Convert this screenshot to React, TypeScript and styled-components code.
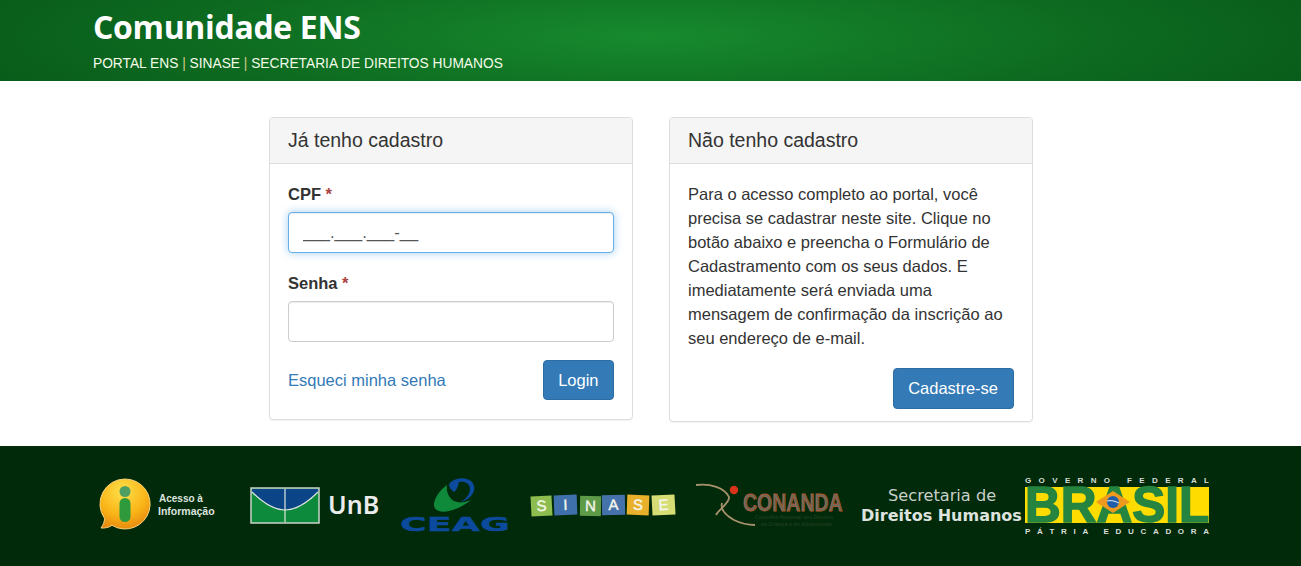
import styled, { createGlobalStyle } from "styled-components";

const GlobalStyle = createGlobalStyle`
  * {
    box-sizing: border-box;
  }

  body {
    margin: 0;
    background: #fff;
    color: #333;
    font-family: "Liberation Sans", Arial, sans-serif;
    font-size: 16.5px;
    line-height: 24px;
  }
`;

const AccessLogo = () => (
  <Logo $left={99} width={118} height={80} viewBox="99 460 118 80">
    <defs>
      <radialGradient id="bubble" cx="45%" cy="25%" r="80%">
        <stop offset="0%" stopColor="#ffe04a" />
        <stop offset="60%" stopColor="#f9b417" />
        <stop offset="100%" stopColor="#e5840f" />
      </radialGradient>
    </defs>
    <path
      d="M125 479a25 25 0 1 1-13 46.300c-3 2.200-7 3-11 2.700 2-3 3.500-6 3.600-9.500A25 25 0 0 1 125 479z"
      fill="url(#bubble)"
      stroke="#f6d27a"
      strokeWidth="1"
    />
    <circle cx="125" cy="491.500" r="5.500" fill="#4f9f62" />
    <rect x="119.500" y="498" width="11" height="24" rx="5.500" fill="#2e9a3c" />
    <LogoText x="159" y="502" fontSize="10" fontWeight="700" fill="#dfe3df">
      Acesso à
    </LogoText>
    <LogoText x="158" y="515" fontSize="10.500" fontWeight="700" fill="#dfe3df">
      Informação
    </LogoText>
  </Logo>
);

const UnbLogo = () => (
  <Logo $left={33} width={131} height={80} viewBox="250 460 131 80">
    <rect x="251" y="488" width="68" height="35" fill="#0d8a3c" stroke="#c9d3c9" strokeWidth="1.500" />
    <path d="M252 489h66v3c-9 9-20 18-33 18s-24-9-33-18z" fill="#0b4587" />
    <path d="M252 492c9 9 20 18 33 18s24-9 33-18" fill="none" stroke="#dfe8df" strokeWidth="1.200" />
    <path d="M285 489v33" stroke="#dfe8df" strokeWidth="1.200" />
    <LogoText $font="'Noto Sans'" x="328" y="514" fontSize="25" fontWeight="600" fill="#ececec">
      UnB
    </LogoText>
  </Logo>
);

const CeagLogo = () => (
  <Logo $left={19} width={110} height={80} viewBox="400 460 110 80">
    <path
      d="M447 485c-7 5-13 13-13 20 0 6 8 8 15 6 9-2 17-7 22-11-7 3-13 3-17 1-5-3-8-9-7-16z"
      fill="#0f8a3b"
    />
    <path
      d="M449 484c4-5 12-7 18-5 7 2 9 9 6 14-2 4-7 8-12 9 5-3 9-8 9-13 0-6-6-8-11-7-1 4-2 8-5 10-3-2-5-5-5-8z"
      fill="#0b4a9c"
    />
    <LogoText
      $font="'DejaVu Sans'"
      transform="translate(400 531) scale(1 0.55)"
      fontSize="36.500"
      fontWeight="700"
      fill="#0b4a9c"
      stroke="#0b4a9c"
      strokeWidth="0.600"
    >
      CEAG
    </LogoText>
  </Logo>
);

const sinaseTiles = [
  { x: 531, y: 496, w: 21, letter: "S", fill: "#8dbd4f", tilt: -3 },
  { x: 554, y: 495, w: 23, letter: "I", fill: "#3f70ab", tilt: -2 },
  { x: 580, y: 496, w: 21, letter: "N", fill: "#5e9b48", tilt: 1 },
  { x: 602, y: 495, w: 23, letter: "A", fill: "#4672ab", tilt: -1 },
  { x: 627, y: 495, w: 22, letter: "S", fill: "#e9b02c", tilt: 2 },
  { x: 652, y: 495, w: 23, letter: "E", fill: "#d5dd74", tilt: -3 },
];

const SinaseLogo = () => (
  <Logo $left={20} width={147} height={80} viewBox="530 460 147 80">
    {sinaseTiles.map((tile, index) => (
      <g
        key={index}
        transform={`rotate(${tile.tilt} ${tile.x + tile.w / 2} ${tile.y + 10})`}
      >
        <rect x={tile.x} y={tile.y} width={tile.w} height="20" fill={tile.fill} />
        <LogoText
          x={tile.x + tile.w / 2}
          y={tile.y + 15}
          fontSize="15"
          fill="#f4f6ea"
          stroke="#f4f6ea"
          strokeWidth="0.400"
          textAnchor="middle"
        >
          {tile.letter}
        </LogoText>
      </g>
    ))}
  </Logo>
);

const ConandaLogo = () => (
  <Logo $left={18} width={150} height={80} viewBox="695 460 150 80">
    <path
      d="M696 485c14-2 29 3 33 12 1 6-10 12-13 18"
      fill="none"
      stroke="#a8926c"
      strokeWidth="1.800"
    />
    <path
      d="M722 503c-2 7 5 13 12 17 6 3 14 5 21 5"
      fill="none"
      stroke="#a8926c"
      strokeWidth="1.800"
    />
    <circle cx="734" cy="490" r="4.200" fill="#d9331c" />
    <LogoText
      transform="translate(743 511) scale(1 1.250)"
      fontSize="19.500"
      fontWeight="700"
      fill="#6c6a5e"
      stroke="#b3562a"
      strokeWidth="0.600"
    >
      CONANDA
    </LogoText>
    <LogoText x="755" y="519" fontSize="5.200" fontWeight="700" fill="#1e3d1c">
      Conselho Nacional dos Direitos
    </LogoText>
    <LogoText x="761" y="526" fontSize="5.200" fontWeight="700" fill="#1e3d1c">
      da Criança e do Adolescente
    </LogoText>
  </Logo>
);

const RightsLogo = () => (
  <Logo $left={15} width={164} height={80} viewBox="860 460 164 80">
    <LogoText $font="'DejaVu Sans'" x="888" y="501" fontSize="16.200" fill="#c9cfc9">
      Secretaria de
    </LogoText>
    <LogoText $font="'DejaVu Sans'" x="861" y="521" fontSize="16" fontWeight="700" fill="#dfe3df">
      Direitos Humanos
    </LogoText>
  </Logo>
);

const BrasilLogo = () => (
  <Logo $left={0} width={186} height={80} viewBox="1024 460 186 80">
    <LogoText x="1025" y="483" fontSize="8" fontWeight="700" fill="#d8ded8" textLength="184">
      GOVERNO FEDERAL
    </LogoText>
    <rect x="1025" y="487" width="184" height="36" fill="#fedc00" />
    <LogoText
      x="1025"
      y="522"
      fontSize="49.500"
      fontWeight="700"
      fill="#25843f"
      stroke="#25843f"
      strokeWidth="1.500"
    >
      BRASIL
    </LogoText>
    <path d="M1113 491l17 11-17 11-17-11z" fill="#ef9a1e" />
    <circle cx="1113" cy="502" r="6" fill="#1f5ea8" />
    <path d="M1107 501c4-1 8 0 12 2" fill="none" stroke="#e8eef5" strokeWidth="1" />
    <LogoText x="1025" y="534" fontSize="8" fontWeight="700" fill="#d8ded8" textLength="184">
      PÁTRIA EDUCADORA
    </LogoText>
  </Logo>
);

export default function App() {
  return (
    <>
      <GlobalStyle />
      <Header>
        <Title>Comunidade ENS</Title>
        <HeaderLinks>
          <HeaderLink href="#">PORTAL ENS</HeaderLink>
          <Divider> | </Divider>
          <HeaderLink href="#">SINASE</HeaderLink>
          <Divider> | </Divider>
          <HeaderLink href="#">SECRETARIA DE DIREITOS HUMANOS</HeaderLink>
        </HeaderLinks>
      </Header>

      <Main>
        <Panel>
          <PanelHeading>Já tenho cadastro</PanelHeading>
          <PanelBody>
            <Field>
              <Label>
                CPF <Required>*</Required>
              </Label>
              <Input $focused defaultValue="___.___.___-__" />
            </Field>
            <Field>
              <Label>
                Senha <Required>*</Required>
              </Label>
              <Input type="password" />
            </Field>
            <Actions>
              <Link href="#">Esqueci minha senha</Link>
              <Button type="button">Login</Button>
            </Actions>
          </PanelBody>
        </Panel>

        <Panel>
          <PanelHeading>Não tenho cadastro</PanelHeading>
          <PanelBody>
            <Paragraph>
              Para o acesso completo ao portal, você precisa se cadastrar neste
              site. Clique no botão abaixo e preencha o Formulário de
              Cadastramento com os seus dados. E imediatamente será enviada uma
              mensagem de confirmação da inscrição ao seu endereço de e-mail.
            </Paragraph>
            <RightActions>
              <Button type="button" $large>
                Cadastre-se
              </Button>
            </RightActions>
          </PanelBody>
        </Panel>
      </Main>

      <Footer>
        <AccessLogo />
        <UnbLogo />
        <CeagLogo />
        <SinaseLogo />
        <ConandaLogo />
        <RightsLogo />
        <BrasilLogo />
      </Footer>
    </>
  );
}

const Header = styled.header`
  height: 81px;
  padding: 6px 0 0 93px;
  background: radial-gradient(
    ellipse 700px 110px at 50% 45%,
    #178a2e 0%,
    #0d6a20 65%,
    #095d1a 100%
  );
`;

const Title = styled.h1`
  margin: 0;
  color: #fff;
  font-family: "Open Sans", sans-serif;
  font-size: 32px;
  font-weight: 700;
  line-height: 42px;
  letter-spacing: -0.33px;
`;

const HeaderLinks = styled.div`
  margin-top: 4px;
  color: #e0c98a;
  font-size: 13.75px;
  line-height: 24px;
  white-space: pre;
`;

const HeaderLink = styled.a`
  color: #f4fbe9;
  text-decoration: none;
`;

const Divider = styled.span`
  color: #d9c98a;
`;

const Main = styled.main`
  display: grid;
  grid-template-columns: 364px 364px;
  gap: 36px;
  align-items: start;
  justify-content: center;
  height: 365px;
  padding-top: 36px;
`;

const Panel = styled.section`
  border: 1px solid #ddd;
  border-radius: 4px;
  background: #fff;
  box-shadow: 0 1px 1px rgba(0, 0, 0, 0.05);
`;

const PanelHeading = styled.h3`
  margin: 0;
  height: 46px;
  padding: 0 18.5px;
  border-bottom: 1px solid #ddd;
  border-radius: 3px 3px 0 0;
  background: #f5f5f5;
  color: #333;
  font-size: 19.5px;
  font-weight: 400;
  line-height: 45px;
`;

const PanelBody = styled.div`
  padding: 18px 18px 19px;
`;

const Field = styled.div`
  margin-bottom: 18px;
`;

const Label = styled.label`
  display: block;
  margin-bottom: 6px;
  padding-left: 0.5px;
  font-weight: 700;
`;

const Required = styled.span`
  color: #a94442;
`;

const Input = styled.input<{ $focused?: boolean }>`
  display: block;
  width: 100%;
  height: 41px;
  padding: 6px 14px;
  border: 1px solid ${(p) => (p.$focused ? "#66afe9" : "#ccc")};
  border-radius: 4px;
  outline: none;
  background: #fff;
  color: #555;
  font-family: inherit;
  font-size: 16.5px;
  box-shadow: ${(p) =>
    p.$focused
      ? "inset 0 1px 1px rgba(0,0,0,.075), 0 0 8px rgba(102,175,233,.6)"
      : "inset 0 1px 1px rgba(0,0,0,.075)"};
`;

const Actions = styled.div`
  display: flex;
  align-items: center;
  justify-content: space-between;
  padding-left: 0.5px;
`;

const RightActions = styled.div`
  display: flex;
  justify-content: flex-end;
  margin-top: 18px;
  margin-bottom: -7px;
`;

const Link = styled.a`
  color: #337ab7;
  text-decoration: none;
`;

const Button = styled.button<{ $large?: boolean }>`
  height: ${(p) => (p.$large ? "41px" : "40px")};
  padding: 0 ${(p) => (p.$large ? "14.5px" : "14px")};
  border: 1px solid #2e6da4;
  border-radius: 4px;
  background: #337ab7;
  color: #fff;
  font-family: inherit;
  font-size: 16.5px;
`;

const Paragraph = styled.p`
  margin: 0;
  padding-left: 0.5px;
`;

const Footer = styled.footer`
  display: flex;
  height: 120px;
  padding-top: 14px;
  background: #002a0a;
`;

const Logo = styled.svg<{ $left: number }>`
  display: block;
  flex: none;
  margin-left: ${(p) => p.$left}px;
`;

const LogoText = styled.text<{ $font?: string }>`
  font-family: ${(p) => p.$font ?? '"Liberation Sans"'}, Arial, sans-serif;
`;
